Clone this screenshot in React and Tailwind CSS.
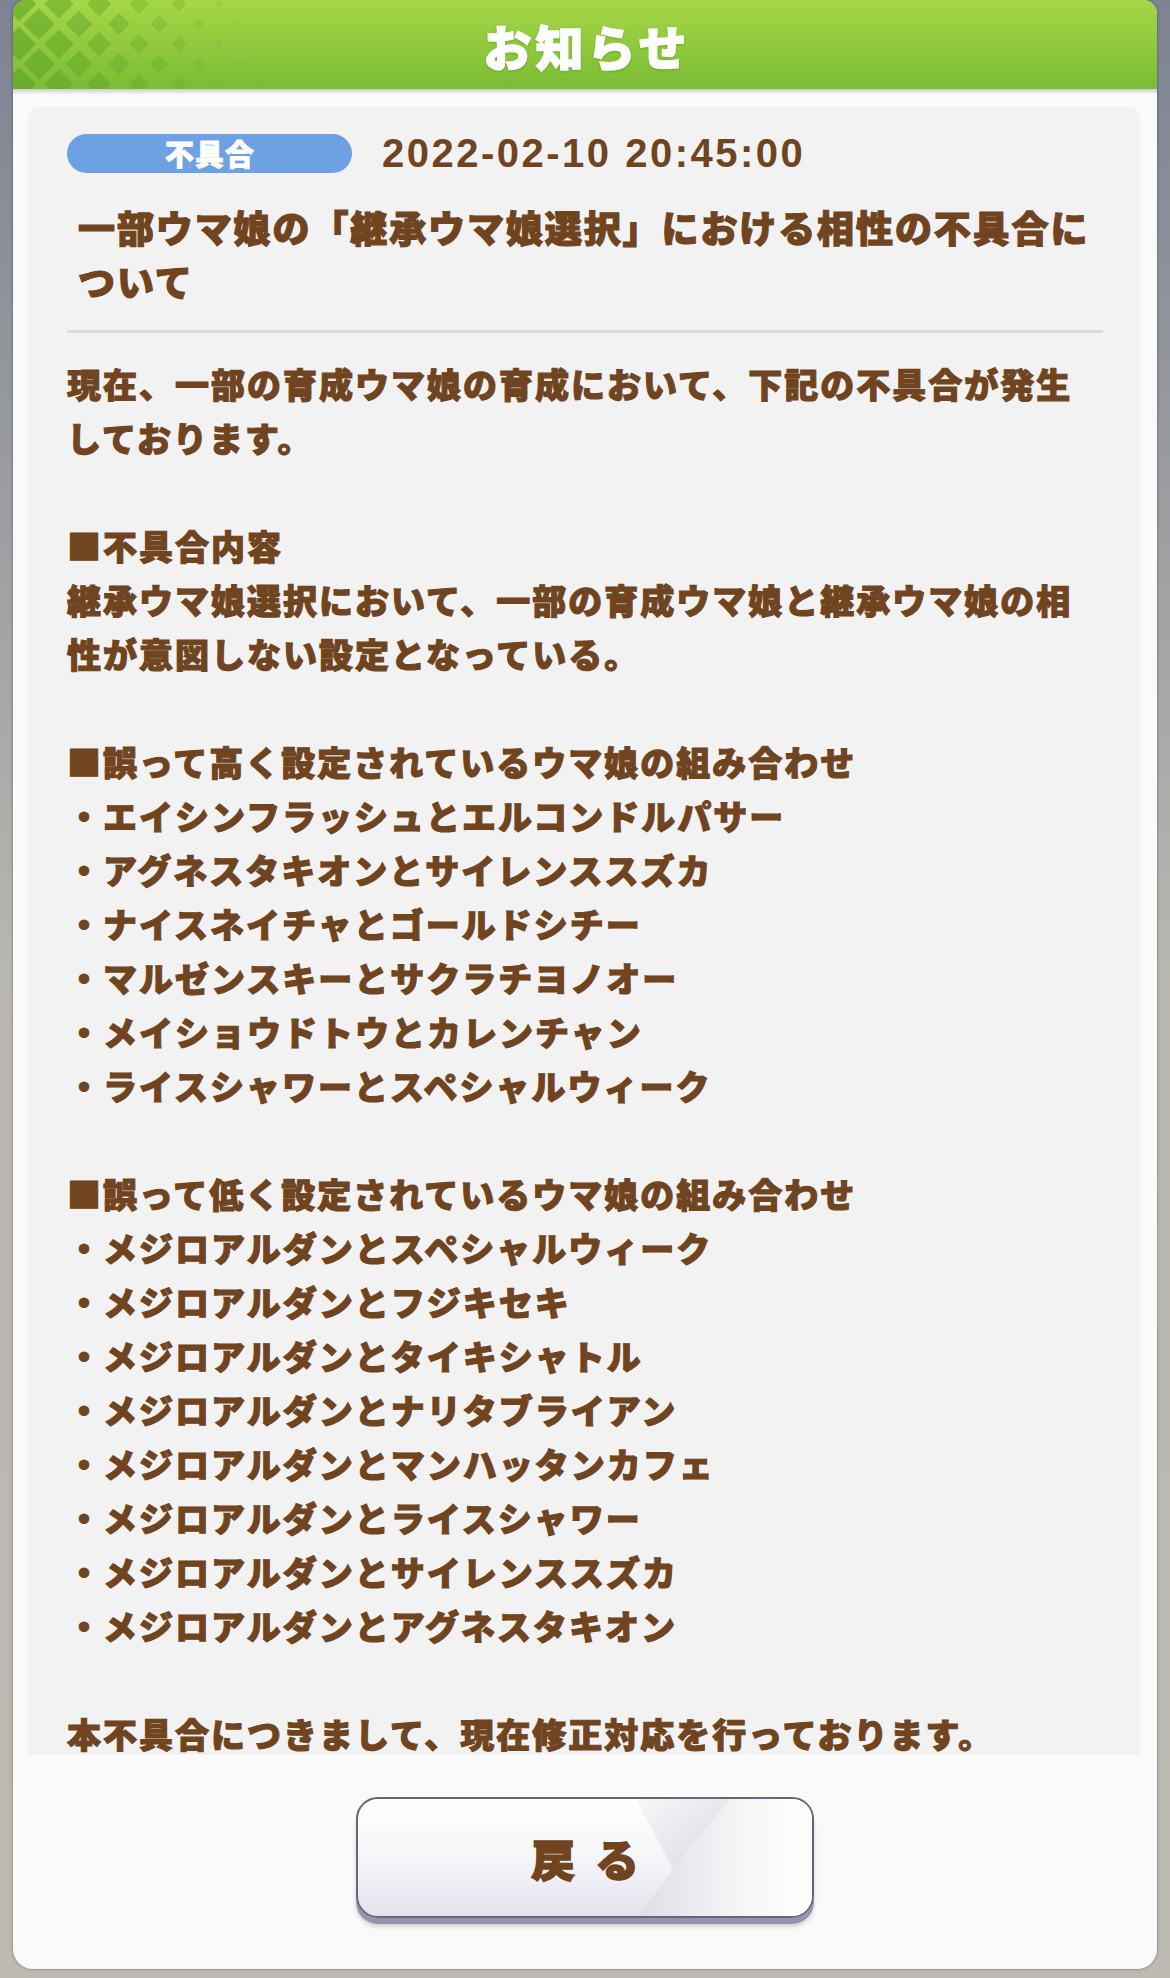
import React from 'react';

const CJK = { fontFamily: '"Noto Sans CJK JP", "Noto Sans", sans-serif' };

const bodyLines = [
  '現在、一部の育成ウマ娘の育成において、下記の不具合が発生',
  'しております。',
  '',
  '■不具合内容',
  '継承ウマ娘選択において、一部の育成ウマ娘と継承ウマ娘の相',
  '性が意図しない設定となっている。',
  '',
  '■誤って高く設定されているウマ娘の組み合わせ',
  '・エイシンフラッシュとエルコンドルパサー',
  '・アグネスタキオンとサイレンススズカ',
  '・ナイスネイチャとゴールドシチー',
  '・マルゼンスキーとサクラチヨノオー',
  '・メイショウドトウとカレンチャン',
  '・ライスシャワーとスペシャルウィーク',
  '',
  '■誤って低く設定されているウマ娘の組み合わせ',
  '・メジロアルダンとスペシャルウィーク',
  '・メジロアルダンとフジキセキ',
  '・メジロアルダンとタイキシャトル',
  '・メジロアルダンとナリタブライアン',
  '・メジロアルダンとマンハッタンカフェ',
  '・メジロアルダンとライスシャワー',
  '・メジロアルダンとサイレンススズカ',
  '・メジロアルダンとアグネスタキオン',
  '',
  '本不具合につきまして、現在修正対応を行っております。',
];

// diamond lattice in the left part of the header
function HeaderPattern() {
  const shapes = [];
  for (let k = 0; k < 13; k++) {
    const s = 17 * (1 - k / 14);
    const op = 0.6 * (1 - k / 13);
    for (let m = -1; m < 4; m++) {
      const cx = 6 + k * 20;
      const cy = m * 40 + (k % 2 ? 20 : 0) + 4;
      shapes.push(
        <polygon
          key={k + '-' + m}
          points={`${cx},${cy - s} ${cx + s},${cy} ${cx},${cy + s} ${cx - s},${cy}`}
          fill="#5fa226"
          opacity={op}
        />
      );
    }
  }
  return (
    <svg className="absolute left-0 top-0" width="300" height="89" viewBox="0 0 300 89">
      {shapes}
    </svg>
  );
}

function BackButton() {
  return (
    <div className="relative w-[458px] h-[121px] rounded-[22px] border-[2.5px] border-[#66647f] overflow-hidden bg-gradient-to-b from-[#ffffff] via-[#f6f6f9] to-[#e3e2ec] shadow-[0_6px_0_#9694ad,0_9px_4px_rgba(0,0,0,0.15)]">
      <svg className="absolute inset-0" width="458" height="121" viewBox="0 0 458 121">
        <defs>
          <linearGradient id="gA" x1="0" y1="0" x2="1" y2="1">
            <stop offset="0" stopColor="#f7f7f9" />
            <stop offset="1" stopColor="#d9d8e1" />
          </linearGradient>
          <linearGradient id="gB" x1="0" y1="0" x2="1" y2="0">
            <stop offset="0" stopColor="#dedde5" />
            <stop offset="0.6" stopColor="#f6f6f8" />
            <stop offset="1" stopColor="#ffffff" />
          </linearGradient>
        </defs>
        <polygon points="278,0 372,0 315,70" fill="url(#gA)" />
        <polygon points="372,0 458,0 458,121 278,121 315,70" fill="url(#gB)" />
      </svg>
      <div className="relative h-full flex items-center justify-center">
        <span
          className="text-[44px] font-black tracking-[20px] pl-[20px] text-[#70441f] leading-none [-webkit-text-stroke:1.5px_#70441f]"
          style={CJK}
        >
          戻る
        </span>
      </div>
    </div>
  );
}

export default function App() {
  return (
    <div className="w-[1170px] h-[1978px] overflow-hidden pl-[13px] bg-gradient-to-b from-[#7d8391] via-[#b9b7b0] to-[#bdbab2]">
      <div className="w-[1144px] h-[1969px] flex flex-col bg-[#fafafa] rounded-t-[14px] rounded-b-[20px] overflow-hidden shadow-[0_0_3px_rgba(0,0,0,0.4)]">
        {/* header */}
        <div className="relative h-[89px] shrink-0 bg-gradient-to-b from-[#a6d746] to-[#7abc35] flex items-center justify-center">
          <HeaderPattern />
          <span
            className="relative text-white text-[48px] font-black tracking-[4px] pl-[4px] leading-none [-webkit-text-stroke:1.5px_#ffffff] drop-shadow-[0_1px_1px_rgba(60,110,20,0.35)]"
            style={CJK}
          >
            お知らせ
          </span>
        </div>
        <div className="h-[5px] shrink-0 bg-gradient-to-b from-[#cdcdcd] to-[#f3f3f3]" />

        {/* content */}
        <div className="mt-[13px] ml-[15px] w-[1112px] h-[1648px] shrink-0 overflow-hidden rounded-t-[12px] bg-[#f2f2f2] pt-[26px] pl-[39px]">
          <div className="flex items-center gap-[30px]">
            <div className="w-[285px] h-[39px] rounded-full bg-[#6ea1e4] flex items-center justify-center">
              <span
                className="text-white text-[29px] font-black tracking-[1px] pl-[1px] leading-none [-webkit-text-stroke:0.8px_#ffffff]"
                style={CJK}
              >
                不具合
              </span>
            </div>
            <span
              className="text-[40px] font-bold tracking-[2.5px] leading-none text-[#70441f]"
              style={{ fontFamily: '"Liberation Sans", Arial, sans-serif' }}
            >
              2022-02-10 20:45:00
            </span>
          </div>

          <div
            className="mt-[27px] pl-[11px] text-[37px] font-black tracking-[1.9px] leading-[54px] text-[#70441f] [-webkit-text-stroke:1.2px_#70441f]"
            style={CJK}
          >
            <div className="whitespace-nowrap">一部ウマ娘の「継承ウマ娘選択」における相性の不具合に</div>
            <div className="whitespace-nowrap">ついて</div>
          </div>

          <div className="mt-[22px] w-[1036px] h-[3px] bg-[#dcdcdc]" />

          <div
            className="mt-[24px] text-[34px] font-black tracking-[2px] leading-[54px] text-[#70441f] [-webkit-text-stroke:1.1px_#70441f]"
            style={CJK}
          >
            {bodyLines.map((line, i) =>
              line ? (
                <div key={i} className="whitespace-nowrap">
                  {line}
                </div>
              ) : (
                <div key={i} className="h-[54px]" />
              )
            )}
          </div>
        </div>

        {/* footer */}
        <div className="flex-1 flex justify-center pt-[42px]">
          <BackButton />
        </div>
      </div>
    </div>
  );
}
